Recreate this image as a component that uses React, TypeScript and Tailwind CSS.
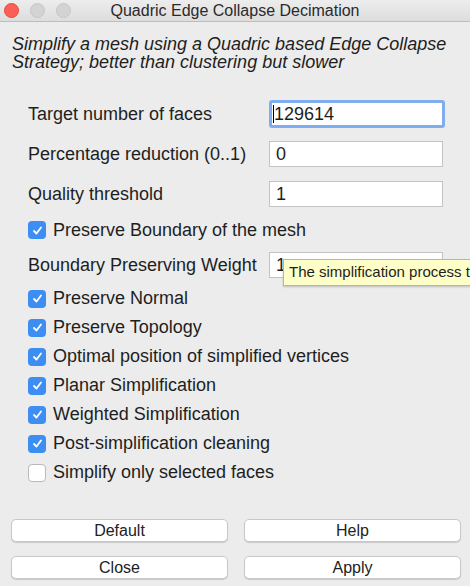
import React from 'react';

const font = { fontFamily: '"Liberation Sans", Arial, sans-serif' };

const Check = ({ checked }: { checked: boolean }) =>
  checked ? (
    <span className="w-[18px] h-[18px] rounded-[4px] bg-[#3d8ef3] flex items-center justify-center shrink-0">
      <svg width="11" height="11" viewBox="0 0 11 11">
        <path d="M2 6 L4.5 8.5 L9 2.5" stroke="white" strokeWidth="1.8" fill="none" strokeLinecap="round" strokeLinejoin="round" />
      </svg>
    </span>
  ) : (
    <span className="w-[18px] h-[18px] rounded-[4px] bg-white border border-[#b9b9b9] shrink-0" />
  );

const CheckRow = ({ label, checked = true, h = 'h-[29px]' }: { label: string; checked?: boolean; h?: string }) => (
  <div className={`flex items-center gap-[7px] ${h}`}>
    <Check checked={checked} />
    <span>{label}</span>
  </div>
);

const FieldRow = ({ label, value, focused, h = 'h-[40px]', children }: { label: string; value: string; focused?: boolean; h?: string; children?: React.ReactNode }) => (
  <div className={`flex items-center ${h}`}>
    <span className="w-[241px] whitespace-nowrap">{label}</span>
    <div className="relative">
      <div
        className={
          focused
            ? 'w-[176px] h-[28px] rounded-[3px] border-[3px] border-[#80acf0] bg-white flex items-center pl-[1px]'
            : 'w-[174px] h-[26px] border border-[#c3c3c3] bg-white flex items-center pl-[6px]'
        }
      >
        {focused && <span className="w-px h-[18px] bg-black" />}
        <span>{value}</span>
      </div>
      {children}
    </div>
  </div>
);

const Btn = ({ label }: { label: string }) => (
  <button className="w-[217px] h-[23px] rounded-[5px] bg-white border border-[#c8c8c8] shadow-[0_1px_1px_rgba(0,0,0,0.15)] text-[16px] leading-none text-[#222]">
    {label}
  </button>
);

export default function App() {
  return (
    <div className="w-[470px] h-[586px] overflow-hidden bg-[#ececec] text-[#1e1e1e] flex flex-col" style={font}>
      {/* title bar */}
      <div className="h-[22px] relative flex items-center justify-center bg-gradient-to-b from-[#ededed] to-[#dddddd] border-b border-[#bdbdbd] shrink-0">
        <div className="absolute left-[4px] top-[3px] flex gap-[11px]">
          <span className="w-[15px] h-[15px] rounded-full bg-[#fc5f57] border border-[#e5483f]" />
          <span className="w-[15px] h-[15px] rounded-full bg-[#d3d3d3] border border-[#c6c6c6]" />
          <span className="w-[15px] h-[15px] rounded-full bg-[#d3d3d3] border border-[#c6c6c6]" />
        </div>
        <span className="text-[16px] text-[#2a2a2a]">Quadric Edge Collapse Decimation</span>
      </div>

      {/* description */}
      <div className="pl-[12px] pt-[13px] italic text-[18px] leading-[18px] whitespace-nowrap">
        <div>Simplify a mesh using a Quadric based Edge Collapse</div>
        <div>Strategy; better than clustering but slower</div>
      </div>

      {/* form */}
      <div className="pl-[28px] pt-[23px] text-[18px]">
        <FieldRow label="Target number of faces" value="129614" focused />
        <FieldRow label="Percentage reduction (0..1)" value="0" />
        <FieldRow label="Quality threshold" value="1" />
        <CheckRow label="Preserve Boundary of the mesh" h="h-[32px]" />
        <FieldRow label="Boundary Preserving Weight" value="1" h="h-[38px]">
          {/* tooltip, runs past the window edge like the reference */}
          <div className="absolute left-[14px] top-[7px] h-[27px] whitespace-nowrap bg-[#fefec8] border border-[#b8b8a0] shadow-[0_1px_2px_rgba(0,0,0,0.2)] px-[5px] flex items-center text-[15px]">
            The simplification process t
          </div>
        </FieldRow>
        <CheckRow label="Preserve Normal" />
        <CheckRow label="Preserve Topology" />
        <CheckRow label="Optimal position of simplified vertices" />
        <CheckRow label="Planar Simplification" />
        <CheckRow label="Weighted Simplification" />
        <CheckRow label="Post-simplification cleaning" />
        <CheckRow label="Simplify only selected faces" checked={false} />
      </div>

      {/* buttons */}
      <div className="px-[11px] pt-[32px] grid grid-cols-2 gap-x-[18px] gap-y-[14px]">
        <Btn label="Default" />
        <Btn label="Help" />
        <Btn label="Close" />
        <Btn label="Apply" />
      </div>
    </div>
  );
}
